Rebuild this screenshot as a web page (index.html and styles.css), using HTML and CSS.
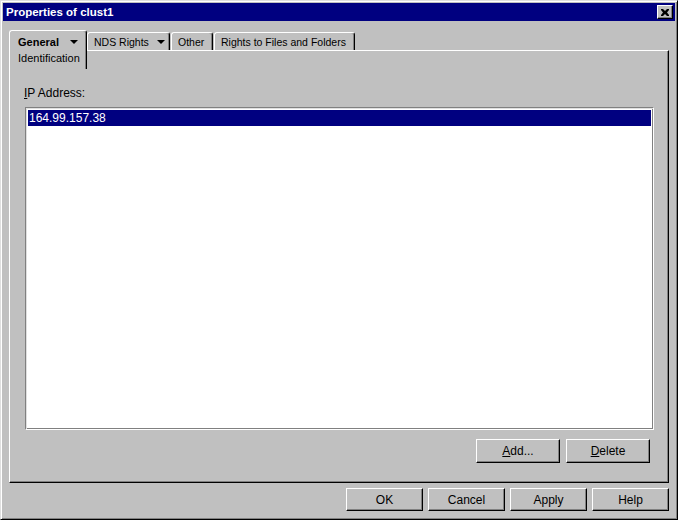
FILE: index.html
```html
<!DOCTYPE html>
<html lang="en">
    <head>
        <meta charset="utf-8" />
        <title>Properties of clust1</title>
        <link rel="stylesheet" href="styles.css">
    </head>
    <body>
        <div class="ventana">
            <header class="titulo">
                <span class="titulo_texto">Properties of clust1</span>
                <button class="titulo_cerrar" title="Close">
                    <svg width="8" height="7" viewBox="0 0 8 7">
                        <path d="M0 0h2l2 2 2-2h2v1l-2 2.5 2 2.5v1h-2l-2-2-2 2h-2v-1l2-2.5-2-2.5z" fill="#000"/>
                    </svg>
                </button>
            </header>

            <div class="cuerpo">
                <nav class="pestanas">
                    <div class="pestana pestana--activa">
                        <div class="pestana_fila"><b>General</b><span class="flecha flecha--general"></span></div>
                        <div class="pestana_fila">Identification</div>
                    </div>
                    <div class="pestana pestana--nds">NDS Rights<span class="flecha flecha--nds"></span></div>
                    <div class="pestana pestana--otro">Other</div>
                    <div class="pestana pestana--derechos">Rights to Files and Folders</div>
                </nav>

                <section class="panel">
                    <label class="etiqueta"><u>I</u>P Address:</label>
                    <ul class="lista">
                        <li class="lista_item lista_item--sel">164.99.157.38</li>
                    </ul>
                    <div class="acciones">
                        <button class="boton boton--chico"><u>A</u>dd...</button>
                        <button class="boton boton--chico"><u>D</u>elete</button>
                    </div>
                </section>

                <footer class="pie">
                    <button class="boton boton--pie">OK</button>
                    <button class="boton boton--pie">Cancel</button>
                    <button class="boton boton--pie">Apply</button>
                    <button class="boton boton--pie">Help</button>
                </footer>
            </div>
        </div>
    </body>
</html>
```

FILE: styles.css
```css
* {
    padding: 0;
    margin: 0;
    box-sizing: border-box;
}

body {
    font-family: "Liberation Sans", Arial, sans-serif;
    font-size: 11px;
    background-color: #c0c0c0;
    color: #000;
}

.ventana {
    display: flex;
    flex-direction: column;
    width: 678px;
    height: 520px;
    padding: 2px;
    background-color: #c0c0c0;
    border: 1px solid;
    border-color: #dfdfdf #000 #000 #dfdfdf;
    box-shadow: inset 1px 1px #fff, inset -1px -1px #808080;
}

.titulo {
    display: flex;
    justify-content: space-between;
    align-items: center;
    height: 18px;
    padding: 0 2px 0 3px;
    background-color: #000080;
    color: #fff;
}

.titulo_texto {
    font-weight: bold;
    font-size: 11.5px;
}

.titulo_cerrar {
    display: flex;
    justify-content: center;
    align-items: center;
    width: 16px;
    height: 14px;
    background-color: #c0c0c0;
    border: 1px solid;
    border-color: #fff #000 #000 #fff;
    box-shadow: inset -1px -1px #808080;
}

.cuerpo {
    flex: 1;
    display: flex;
    flex-direction: column;
    padding: 9px 6px 6px 6px;
}

/* pestañas */
.pestanas {
    display: flex;
    align-items: flex-end;
    height: 20px;
}

.pestana {
    display: flex;
    align-items: center;
    height: 18px;
    padding: 0 6px;
    font-size: 10.5px;
    line-height: 16px;
    border: 1px solid;
    border-bottom: none;
    border-color: #fff #000 #000 #fff;
    border-radius: 3px 3px 0 0;
    box-shadow: inset -1px 0 #808080;
    white-space: nowrap;
}

.pestana--activa {
    position: relative;
    z-index: 1;
    flex-direction: column;
    align-items: flex-start;
    width: 78px;
    height: 39px;
    margin-bottom: -19px;
    padding: 3px 0 0 8px;
    font-size: 11px;
    background-color: #c0c0c0;
}

.pestana_fila {
    display: flex;
    align-items: center;
}

.pestana--nds {
    width: 83px;
}

.pestana--otro {
    width: 42px;
    margin-left: 1px;
}

.pestana--derechos {
    width: 141px;
    margin-left: 1px;
}

.flecha {
    display: inline-block;
    width: 0;
    height: 0;
    border-left: 4px solid transparent;
    border-right: 4px solid transparent;
    border-top: 4px solid #000;
}

.flecha--general {
    margin-left: 11px;
}

.flecha--nds {
    margin-left: 8px;
}

/* panel */
.panel {
    flex: 1;
    display: flex;
    flex-direction: column;
    padding: 35px 14px 19px 14px;
    border: 1px solid;
    border-color: #fff #000 #000 #fff;
    box-shadow: inset -1px -1px #808080;
}

.etiqueta {
    font-size: 12px;
    line-height: 14px;
    margin-bottom: 7px;
}

.lista {
    flex: 1;
    list-style: none;
    margin-left: 1px;
    padding: 1px;
    background-color: #fff;
    border: 1px solid;
    border-color: #808080 #fff #fff #808080;
    box-shadow: inset 1px 1px #dfdfdf, inset -1px -1px #808080;
}

.lista_item {
    height: 16px;
    margin: 1px 1px 0 1px;
    padding-left: 1px;
    font-size: 12px;
    line-height: 16px;
}

.lista_item--sel {
    background-color: #000080;
    color: #fff;
}

.acciones {
    display: flex;
    justify-content: flex-end;
    gap: 6px;
    margin-top: 9px;
    padding-right: 4px;
}

/* botones */
.boton {
    font-family: "Liberation Sans", Arial, sans-serif;
    font-size: 12px;
    color: #000;
    background-color: #c0c0c0;
    border: 1px solid;
    border-color: #fff #000 #000 #fff;
    box-shadow: inset -1px -1px #808080;
}

.boton--chico {
    width: 84px;
    height: 24px;
}

.pie {
    display: flex;
    justify-content: flex-end;
    gap: 5px;
    margin-top: 5px;
}

.boton--pie {
    width: 77px;
    height: 23px;
}
```
